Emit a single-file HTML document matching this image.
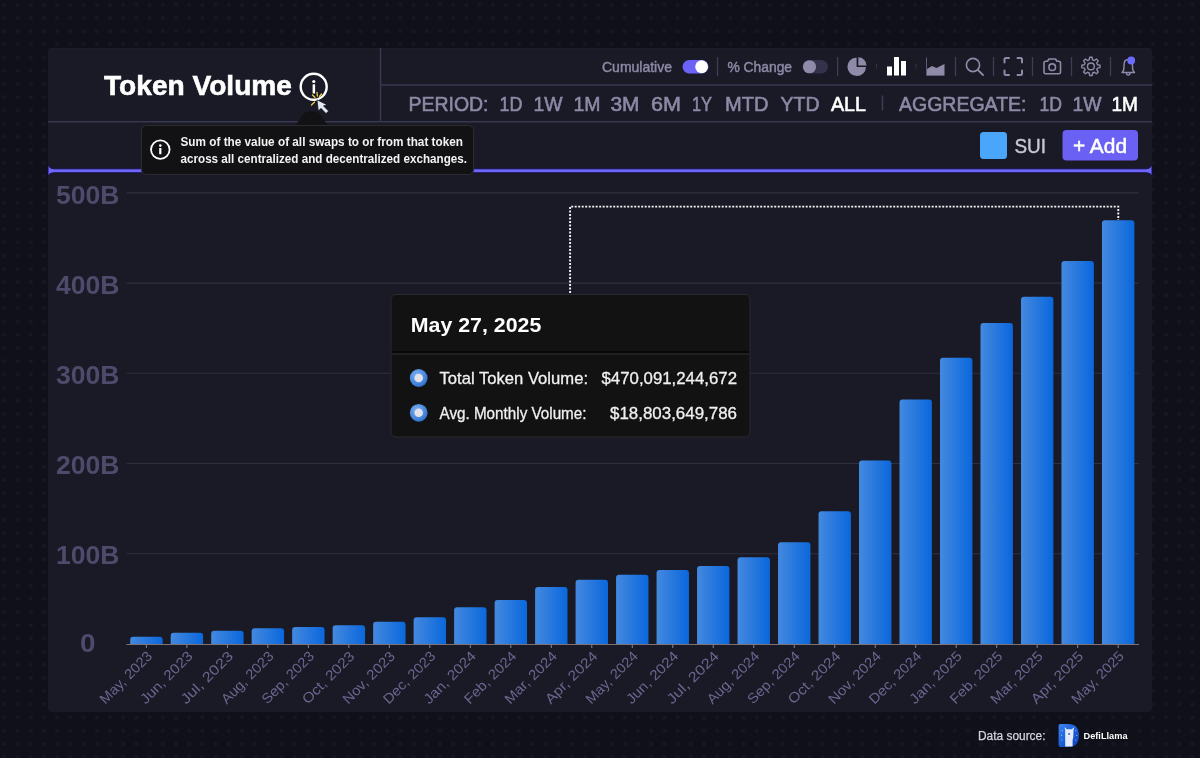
<!DOCTYPE html>
<html><head><meta charset="utf-8">
<style>
html,body{margin:0;padding:0;width:1200px;height:758px;overflow:hidden;background:#0f1019;}
svg{display:block;font-family:"Liberation Sans",sans-serif;will-change:transform;}
</style></head>
<body>
<svg width="1200" height="758" viewBox="0 0 1200 758">
<defs>
  <pattern id="dots" x="-2.2" y="-1.9" width="13.2" height="13.2" patternUnits="userSpaceOnUse">
    <rect x="4.6" y="4.6" width="4" height="4" rx="1.5" fill="#161722"/>
  </pattern>
  <linearGradient id="bar" x1="0" y1="0" x2="1" y2="0">
    <stop offset="0" stop-color="#4489df"/>
    <stop offset="1" stop-color="#0a67dc"/>
  </linearGradient>
  <radialGradient id="dotg" cx="0.4" cy="0.35" r="0.7">
    <stop offset="0" stop-color="#7fb4f2"/>
    <stop offset="1" stop-color="#2a6fd0"/>
  </radialGradient>
</defs>
<!-- page background -->
<rect width="1200" height="758" fill="#0f1019"/>
<rect width="1200" height="758" fill="url(#dots)"/>
<!-- panel -->
<rect x="48" y="48" width="1104" height="664" rx="4" fill="#191a25"/>
<rect x="50" y="48.2" width="1100" height="1.2" fill="#1e1f2a"/>

<!-- header lines -->
<g stroke="#383750" stroke-width="1.5">
  <line x1="380.5" y1="48" x2="380.5" y2="121.5"/>
  <line x1="380.5" y1="85" x2="1152" y2="85"/>
  <line x1="48" y1="121.7" x2="1152" y2="121.7"/>
</g>

<!-- title -->
<text x="104" y="95.4" font-size="28" font-weight="700" fill="#ffffff" stroke="#ffffff" stroke-width="0.6" textLength="188" lengthAdjust="spacingAndGlyphs">Token Volume</text>


<!-- title info icon -->
<circle cx="313.7" cy="86.8" r="13" fill="none" stroke="#ffffff" stroke-width="2.4"/>
<circle cx="313.8" cy="81.5" r="1.6" fill="#ffffff"/>
<rect x="312.6" y="84.3" width="2.5" height="9.2" rx="0.5" fill="#ffffff"/>

<!-- toolbar row 1 -->
<g fill="#8d89a6" font-size="14" stroke="#8d89a6" stroke-width="0.45">
  <text x="602" y="71.7" textLength="70" lengthAdjust="spacingAndGlyphs">Cumulative</text>
  <text x="727.5" y="71.7" textLength="64.5" lengthAdjust="spacingAndGlyphs">% Change</text>
</g>


<!-- toggles -->
<rect x="682.5" y="60" width="26" height="13.5" rx="6.75" fill="#6b63f6"/>
<circle cx="701.6" cy="66.75" r="6.4" fill="#ffffff"/>
<rect x="802.5" y="60" width="25.5" height="13.5" rx="6.75" fill="#33324a"/>
<circle cx="809.5" cy="66.75" r="6.6" fill="#8e8aa8"/>
<!-- dividers -->
<g stroke="#3f3d55" stroke-width="1.3">
  <line x1="717.5" y1="57" x2="717.5" y2="76"/>
  <line x1="837.6" y1="57" x2="837.6" y2="76"/>
  <line x1="955.5" y1="57" x2="955.5" y2="76"/>
  <line x1="993.5" y1="57" x2="993.5" y2="76"/>
  <line x1="1032.5" y1="57" x2="1032.5" y2="76"/>
  <line x1="1071.5" y1="57" x2="1071.5" y2="76"/>
  <line x1="1110.5" y1="57" x2="1110.5" y2="76"/>
</g>
<g stroke="#34334a" stroke-width="1">
  <line x1="876.5" y1="64" x2="876.5" y2="68.5"/>
  <line x1="916" y1="64" x2="916" y2="68.5"/>
</g>
<!-- pie icon -->
<path d="M856.6,57.5 A9.3,9.3 0 1 0 866,67 L856.6,67 Z" fill="#8e8aa8"/>
<path d="M858.3,57.3 A8.3,8.3 0 0 1 866.6,65.5 L858.3,65.5 Z" fill="#8e8aa8"/>
<!-- bar icon -->
<g fill="#ffffff">
  <rect x="887" y="66.5" width="5" height="9"/>
  <rect x="894" y="57" width="5" height="18.5"/>
  <rect x="901" y="61" width="5" height="14.5"/>
</g>
<!-- area icon -->
<path d="M926.5,57.5 V75.5 H944.5" fill="none" stroke="#5e5a78" stroke-width="1"/>
<path d="M927,69 L932,66 L936.5,68 L944.5,64 V75 H927 Z" fill="#8e8aa8"/>
<!-- search -->
<circle cx="973" cy="65" r="6.6" fill="none" stroke="#8e8aa8" stroke-width="1.6"/>
<line x1="977.8" y1="69.8" x2="983" y2="75" stroke="#8e8aa8" stroke-width="1.8" stroke-linecap="round"/>
<!-- fullscreen -->
<g fill="none" stroke="#8e8aa8" stroke-width="2" stroke-linecap="round" stroke-linejoin="round">
  <path d="M1004.5,62.5 V59.5 Q1004.5,58 1006,58 H1009"/>
  <path d="M1017.5,58 H1020.5 Q1022,58 1022,59.5 V62.5"/>
  <path d="M1004.5,70.5 V73.5 Q1004.5,75 1006,75 H1009"/>
  <path d="M1017.5,75 H1020.5 Q1022,75 1022,73.5 V70.5"/>
</g>
<!-- camera -->
<g fill="none" stroke="#8e8aa8" stroke-width="1.6" stroke-linejoin="round">
  <path d="M1044,63 Q1044,61.3 1045.7,61.3 H1047.5 L1049,59 H1055.5 L1057,61.3 H1058.8 Q1060.5,61.3 1060.5,63 V72.3 Q1060.5,73.8 1059,73.8 H1045.5 Q1044,73.8 1044,72.3 Z"/>
  <circle cx="1052.2" cy="67.2" r="3.3"/>
</g>
<!-- gear -->
<g fill="none" stroke="#8e8aa8" stroke-width="1.4" stroke-linejoin="round">
  <path d="M1097.49,64.72 L1100.01,65.12 L1100.01,67.68 L1097.49,68.08 L1096.75,69.87 L1098.25,71.93 L1096.43,73.75 L1094.37,72.25 L1092.58,72.99 L1092.18,75.51 L1089.62,75.51 L1089.22,72.99 L1087.43,72.25 L1085.37,73.75 L1083.55,71.93 L1085.05,69.87 L1084.31,68.08 L1081.79,67.68 L1081.79,65.12 L1084.31,64.72 L1085.05,62.93 L1083.55,60.87 L1085.37,59.05 L1087.43,60.55 L1089.22,59.81 L1089.62,57.29 L1092.18,57.29 L1092.58,59.81 L1094.37,60.55 L1096.43,59.05 L1098.25,60.87 L1096.75,62.93 Z"/>
  <circle cx="1090.9" cy="66.4" r="3.4"/>
</g>
<!-- bell -->
<g fill="none" stroke="#8e8aa8" stroke-width="1.4" stroke-linejoin="round" stroke-linecap="round">
  <path d="M1122,72.5 Q1124,71 1124,67 V65 Q1124,59.5 1128.2,59.5 Q1132.5,59.5 1132.5,65 V67 Q1132.5,71 1134.5,72.5 Z"/>
  <path d="M1126.3,72.8 Q1126.5,75 1128.2,75 Q1130,75 1130.2,72.8"/>
</g>
<circle cx="1131.2" cy="60.5" r="3.9" fill="#6b6bff"/>

<!-- toolbar row 2 -->
<g fill="#8d89a6" font-size="20.5" stroke="#8d89a6" stroke-width="0.6">
  <text x="408.5" y="110.8" textLength="80" lengthAdjust="spacingAndGlyphs">PERIOD:</text>
  <text x="499.5" y="110.8" textLength="23" lengthAdjust="spacingAndGlyphs">1D</text>
  <text x="533.5" y="110.8" textLength="29" lengthAdjust="spacingAndGlyphs">1W</text>
  <text x="573.5" y="110.8" textLength="27" lengthAdjust="spacingAndGlyphs">1M</text>
  <text x="610.5" y="110.8" textLength="29" lengthAdjust="spacingAndGlyphs">3M</text>
  <text x="651.0" y="110.8" textLength="30" lengthAdjust="spacingAndGlyphs">6M</text>
  <text x="692.0" y="110.8" textLength="20" lengthAdjust="spacingAndGlyphs">1Y</text>
  <text x="725.0" y="110.8" textLength="43.5" lengthAdjust="spacingAndGlyphs">MTD</text>
  <text x="780.5" y="110.8" textLength="39" lengthAdjust="spacingAndGlyphs">YTD</text>
  <text x="831.0" y="110.8" textLength="35" lengthAdjust="spacingAndGlyphs" fill="#ffffff" stroke="#ffffff">ALL</text>
  <text x="899.0" y="110.8" textLength="127.5" lengthAdjust="spacingAndGlyphs">AGGREGATE:</text>
  <text x="1039.5" y="110.8" textLength="22.5" lengthAdjust="spacingAndGlyphs">1D</text>
  <text x="1072.5" y="110.8" textLength="29" lengthAdjust="spacingAndGlyphs">1W</text>
  <text x="1111.5" y="110.8" textLength="26.5" lengthAdjust="spacingAndGlyphs" fill="#ffffff" stroke="#ffffff">1M</text>
</g>
<line x1="882.5" y1="95.5" x2="882.5" y2="110.5" stroke="#3f3d55" stroke-width="1.5"/>

<!-- SUI legend / Add -->
<rect x="980" y="132" width="27" height="27" rx="3.5" fill="#4aa6fb"/>
<text x="1014.5" y="152.7" font-size="20" fill="#c9c8d2" stroke="#c9c8d2" stroke-width="0.4" textLength="31.5" lengthAdjust="spacingAndGlyphs">SUI</text>
<rect x="1062.5" y="130" width="75.5" height="30.5" rx="4" fill="#6a60f4"/>
<text x="1073" y="152.7" font-size="20" fill="#ffffff" stroke="#ffffff" stroke-width="0.5" textLength="54" lengthAdjust="spacingAndGlyphs">+ Add</text>

<!-- purple slider line -->
<path d="M48,164.5 Q49.2,168.6 53.5,168.8 H1146.5 Q1150.8,168.6 1152,164.5 V176.2 Q1150.8,172.8 1146.5,172.7 H53.5 Q49.2,172.8 48,176.2 Z" fill="#6d66f8" stroke="#120f45" stroke-width="0.9"/>

<!-- chart grid -->
<g stroke="#302f3f" stroke-width="1.1">
  <line x1="126.5" y1="192.9" x2="1139" y2="192.9"/>
  <line x1="126.5" y1="283.1" x2="1139" y2="283.1"/>
  <line x1="126.5" y1="373.3" x2="1139" y2="373.3"/>
  <line x1="126.5" y1="463.5" x2="1139" y2="463.5"/>
  <line x1="126.5" y1="553.7" x2="1139" y2="553.7"/>
</g>
<g fill="#4d4a6b" font-size="26" font-weight="700">
  <text x="56" y="204.4" textLength="63.5" lengthAdjust="spacingAndGlyphs">500B</text>
  <text x="56" y="293.8" textLength="63.5" lengthAdjust="spacingAndGlyphs">400B</text>
  <text x="56" y="383.9" textLength="63.5" lengthAdjust="spacingAndGlyphs">300B</text>
  <text x="56" y="473.6" textLength="63.5" lengthAdjust="spacingAndGlyphs">200B</text>
  <text x="56" y="563.8" textLength="63.5" lengthAdjust="spacingAndGlyphs">100B</text>
  <text x="80" y="651.8" textLength="15.5" lengthAdjust="spacingAndGlyphs">0</text>
</g>

<!-- BARS -->
<g id="bars" fill="url(#bar)">
<path d="M130.20,644.3 V639.70 Q130.20,636.70 133.20,636.70 H159.60 Q162.60,636.70 162.60,639.70 V644.3 Z"/>
<path d="M170.69,644.3 V635.70 Q170.69,632.70 173.69,632.70 H200.09 Q203.09,632.70 203.09,635.70 V644.3 Z"/>
<path d="M211.18,644.3 V633.70 Q211.18,630.70 214.18,630.70 H240.58 Q243.58,630.70 243.58,633.70 V644.3 Z"/>
<path d="M251.67,644.3 V631.30 Q251.67,628.30 254.67,628.30 H281.07 Q284.07,628.30 284.07,631.30 V644.3 Z"/>
<path d="M292.16,644.3 V630.00 Q292.16,627.00 295.16,627.00 H321.56 Q324.56,627.00 324.56,630.00 V644.3 Z"/>
<path d="M332.65,644.3 V628.30 Q332.65,625.30 335.65,625.30 H362.05 Q365.05,625.30 365.05,628.30 V644.3 Z"/>
<path d="M373.14,644.3 V624.70 Q373.14,621.70 376.14,621.70 H402.54 Q405.54,621.70 405.54,624.70 V644.3 Z"/>
<path d="M413.63,644.3 V620.30 Q413.63,617.30 416.63,617.30 H443.03 Q446.03,617.30 446.03,620.30 V644.3 Z"/>
<path d="M454.12,644.3 V610.30 Q454.12,607.30 457.12,607.30 H483.52 Q486.52,607.30 486.52,610.30 V644.3 Z"/>
<path d="M494.61,644.3 V603.00 Q494.61,600.00 497.61,600.00 H524.01 Q527.01,600.00 527.01,603.00 V644.3 Z"/>
<path d="M535.10,644.3 V590.00 Q535.10,587.00 538.10,587.00 H564.50 Q567.50,587.00 567.50,590.00 V644.3 Z"/>
<path d="M575.59,644.3 V582.70 Q575.59,579.70 578.59,579.70 H604.99 Q607.99,579.70 607.99,582.70 V644.3 Z"/>
<path d="M616.08,644.3 V577.70 Q616.08,574.70 619.08,574.70 H645.48 Q648.48,574.70 648.48,577.70 V644.3 Z"/>
<path d="M656.57,644.3 V573.00 Q656.57,570.00 659.57,570.00 H685.97 Q688.97,570.00 688.97,573.00 V644.3 Z"/>
<path d="M697.06,644.3 V569.00 Q697.06,566.00 700.06,566.00 H726.46 Q729.46,566.00 729.46,569.00 V644.3 Z"/>
<path d="M737.55,644.3 V560.30 Q737.55,557.30 740.55,557.30 H766.95 Q769.95,557.30 769.95,560.30 V644.3 Z"/>
<path d="M778.04,644.3 V545.30 Q778.04,542.30 781.04,542.30 H807.44 Q810.44,542.30 810.44,545.30 V644.3 Z"/>
<path d="M818.53,644.3 V514.30 Q818.53,511.30 821.53,511.30 H847.93 Q850.93,511.30 850.93,514.30 V644.3 Z"/>
<path d="M859.02,644.3 V463.40 Q859.02,460.40 862.02,460.40 H888.42 Q891.42,460.40 891.42,463.40 V644.3 Z"/>
<path d="M899.51,644.3 V402.50 Q899.51,399.50 902.51,399.50 H928.91 Q931.91,399.50 931.91,402.50 V644.3 Z"/>
<path d="M940.00,644.3 V360.70 Q940.00,357.70 943.00,357.70 H969.40 Q972.40,357.70 972.40,360.70 V644.3 Z"/>
<path d="M980.49,644.3 V326.00 Q980.49,323.00 983.49,323.00 H1009.89 Q1012.89,323.00 1012.89,326.00 V644.3 Z"/>
<path d="M1020.98,644.3 V299.80 Q1020.98,296.80 1023.98,296.80 H1050.38 Q1053.38,296.80 1053.38,299.80 V644.3 Z"/>
<path d="M1061.47,644.3 V264.00 Q1061.47,261.00 1064.47,261.00 H1090.87 Q1093.87,261.00 1093.87,264.00 V644.3 Z"/>
<path d="M1101.96,644.3 V223.30 Q1101.96,220.30 1104.96,220.30 H1131.36 Q1134.36,220.30 1134.36,223.30 V644.3 Z"/>
</g>

<!-- axis -->
<line x1="126.5" y1="644.5" x2="1139" y2="644.5" stroke="#7d7478" stroke-width="1.1"/>
<g id="ticks" stroke="#8a8398" stroke-width="1">
<line x1="146.40" y1="644.8" x2="146.40" y2="648"/>
<line x1="186.89" y1="644.8" x2="186.89" y2="648"/>
<line x1="227.38" y1="644.8" x2="227.38" y2="648"/>
<line x1="267.87" y1="644.8" x2="267.87" y2="648"/>
<line x1="308.36" y1="644.8" x2="308.36" y2="648"/>
<line x1="348.85" y1="644.8" x2="348.85" y2="648"/>
<line x1="389.34" y1="644.8" x2="389.34" y2="648"/>
<line x1="429.83" y1="644.8" x2="429.83" y2="648"/>
<line x1="470.32" y1="644.8" x2="470.32" y2="648"/>
<line x1="510.81" y1="644.8" x2="510.81" y2="648"/>
<line x1="551.30" y1="644.8" x2="551.30" y2="648"/>
<line x1="591.79" y1="644.8" x2="591.79" y2="648"/>
<line x1="632.28" y1="644.8" x2="632.28" y2="648"/>
<line x1="672.77" y1="644.8" x2="672.77" y2="648"/>
<line x1="713.26" y1="644.8" x2="713.26" y2="648"/>
<line x1="753.75" y1="644.8" x2="753.75" y2="648"/>
<line x1="794.24" y1="644.8" x2="794.24" y2="648"/>
<line x1="834.73" y1="644.8" x2="834.73" y2="648"/>
<line x1="875.22" y1="644.8" x2="875.22" y2="648"/>
<line x1="915.71" y1="644.8" x2="915.71" y2="648"/>
<line x1="956.20" y1="644.8" x2="956.20" y2="648"/>
<line x1="996.69" y1="644.8" x2="996.69" y2="648"/>
<line x1="1037.18" y1="644.8" x2="1037.18" y2="648"/>
<line x1="1077.67" y1="644.8" x2="1077.67" y2="648"/>
<line x1="1118.16" y1="644.8" x2="1118.16" y2="648"/>
</g>
<g id="xlabels" fill="#6a6690" font-size="14">
<text x="153.00" y="657" text-anchor="end" textLength="67.5" lengthAdjust="spacingAndGlyphs" transform="rotate(-45 153.00 657)">May, 2023</text>
<text x="193.49" y="657" text-anchor="end" textLength="67.5" lengthAdjust="spacingAndGlyphs" transform="rotate(-45 193.49 657)">Jun, 2023</text>
<text x="233.98" y="657" text-anchor="end" textLength="67.5" lengthAdjust="spacingAndGlyphs" transform="rotate(-45 233.98 657)">Jul, 2023</text>
<text x="274.47" y="657" text-anchor="end" textLength="67.5" lengthAdjust="spacingAndGlyphs" transform="rotate(-45 274.47 657)">Aug, 2023</text>
<text x="314.96" y="657" text-anchor="end" textLength="67.5" lengthAdjust="spacingAndGlyphs" transform="rotate(-45 314.96 657)">Sep, 2023</text>
<text x="355.45" y="657" text-anchor="end" textLength="67.5" lengthAdjust="spacingAndGlyphs" transform="rotate(-45 355.45 657)">Oct, 2023</text>
<text x="395.94" y="657" text-anchor="end" textLength="67.5" lengthAdjust="spacingAndGlyphs" transform="rotate(-45 395.94 657)">Nov, 2023</text>
<text x="436.43" y="657" text-anchor="end" textLength="67.5" lengthAdjust="spacingAndGlyphs" transform="rotate(-45 436.43 657)">Dec, 2023</text>
<text x="476.92" y="657" text-anchor="end" textLength="67.5" lengthAdjust="spacingAndGlyphs" transform="rotate(-45 476.92 657)">Jan, 2024</text>
<text x="517.41" y="657" text-anchor="end" textLength="67.5" lengthAdjust="spacingAndGlyphs" transform="rotate(-45 517.41 657)">Feb, 2024</text>
<text x="557.90" y="657" text-anchor="end" textLength="67.5" lengthAdjust="spacingAndGlyphs" transform="rotate(-45 557.90 657)">Mar, 2024</text>
<text x="598.39" y="657" text-anchor="end" textLength="67.5" lengthAdjust="spacingAndGlyphs" transform="rotate(-45 598.39 657)">Apr, 2024</text>
<text x="638.88" y="657" text-anchor="end" textLength="67.5" lengthAdjust="spacingAndGlyphs" transform="rotate(-45 638.88 657)">May, 2024</text>
<text x="679.37" y="657" text-anchor="end" textLength="67.5" lengthAdjust="spacingAndGlyphs" transform="rotate(-45 679.37 657)">Jun, 2024</text>
<text x="719.86" y="657" text-anchor="end" textLength="67.5" lengthAdjust="spacingAndGlyphs" transform="rotate(-45 719.86 657)">Jul, 2024</text>
<text x="760.35" y="657" text-anchor="end" textLength="67.5" lengthAdjust="spacingAndGlyphs" transform="rotate(-45 760.35 657)">Aug, 2024</text>
<text x="800.84" y="657" text-anchor="end" textLength="67.5" lengthAdjust="spacingAndGlyphs" transform="rotate(-45 800.84 657)">Sep, 2024</text>
<text x="841.33" y="657" text-anchor="end" textLength="67.5" lengthAdjust="spacingAndGlyphs" transform="rotate(-45 841.33 657)">Oct, 2024</text>
<text x="881.82" y="657" text-anchor="end" textLength="67.5" lengthAdjust="spacingAndGlyphs" transform="rotate(-45 881.82 657)">Nov, 2024</text>
<text x="922.31" y="657" text-anchor="end" textLength="67.5" lengthAdjust="spacingAndGlyphs" transform="rotate(-45 922.31 657)">Dec, 2024</text>
<text x="962.80" y="657" text-anchor="end" textLength="67.5" lengthAdjust="spacingAndGlyphs" transform="rotate(-45 962.80 657)">Jan, 2025</text>
<text x="1003.29" y="657" text-anchor="end" textLength="67.5" lengthAdjust="spacingAndGlyphs" transform="rotate(-45 1003.29 657)">Feb, 2025</text>
<text x="1043.78" y="657" text-anchor="end" textLength="67.5" lengthAdjust="spacingAndGlyphs" transform="rotate(-45 1043.78 657)">Mar, 2025</text>
<text x="1084.27" y="657" text-anchor="end" textLength="67.5" lengthAdjust="spacingAndGlyphs" transform="rotate(-45 1084.27 657)">Apr, 2025</text>
<text x="1124.76" y="657" text-anchor="end" textLength="67.5" lengthAdjust="spacingAndGlyphs" transform="rotate(-45 1124.76 657)">May, 2025</text>
</g>


<!-- dotted indicator -->
<path d="M570.1,293 V206.6 H1118.3 V220" fill="none" stroke="#f4f4f8" stroke-width="1.9" stroke-dasharray="2 1.5"/>

<!-- tooltip card -->
<rect x="391" y="294.5" width="359" height="142.5" rx="5" fill="#121212" stroke="#2a2a2e" stroke-width="1"/>
<line x1="391.5" y1="352" x2="749.5" y2="352" stroke="#000000" stroke-width="1.2"/>
<line x1="391.5" y1="354" x2="749.5" y2="354" stroke="#2e2e30" stroke-width="1.2"/>
<text x="410.8" y="331.8" font-size="21" font-weight="700" fill="#ffffff" textLength="130.5" lengthAdjust="spacingAndGlyphs">May 27, 2025</text>
<circle cx="418.7" cy="378" r="8.9" fill="url(#dotg)"/>
<circle cx="418.7" cy="378" r="4.3" fill="#e2e2e8"/>
<circle cx="418.7" cy="412.8" r="8.9" fill="url(#dotg)"/>
<circle cx="418.7" cy="412.8" r="4.3" fill="#e2e2e8"/>
<g fill="#f0f0f0" font-size="17" stroke="#f0f0f0" stroke-width="0.3">
  <text x="439.5" y="384.2" textLength="148.5" lengthAdjust="spacingAndGlyphs">Total Token Volume:</text>
  <text x="439.5" y="419" textLength="147" lengthAdjust="spacingAndGlyphs">Avg. Monthly Volume:</text>
  <text x="601.5" y="384.2" textLength="135.5" lengthAdjust="spacingAndGlyphs">$470,091,244,672</text>
  <text x="610" y="419" textLength="127" lengthAdjust="spacingAndGlyphs">$18,803,649,786</text>
</g>

<!-- footer -->
<text x="978" y="739.7" font-size="12" fill="#d4d4dc" stroke="#d4d4dc" stroke-width="0.25" textLength="67.5" lengthAdjust="spacingAndGlyphs">Data source:</text>
<defs><linearGradient id="llg" x1="0" y1="0" x2="1" y2="1"><stop offset="0" stop-color="#3f86f2"/><stop offset="0.5" stop-color="#1a5fd9"/><stop offset="1" stop-color="#0d3fb8"/></linearGradient></defs>
<path d="M1058.6,725.8 Q1058.6,724 1060.4,724 H1067.8 Q1079,724 1079,735.4 Q1079,746.9 1067.8,746.9 H1060.4 Q1058.6,746.9 1058.6,745.1 Z" fill="url(#llg)"/>
<path d="M1065.2,746.5 V737.2 Q1065,733 1065.3,730.6 L1064.4,727 L1066.8,729.2 H1071.8 L1074.4,727 L1073.4,730.6 Q1073.6,733 1073.3,737.2 L1072.6,740 V746.5 Z" fill="#e4ecfb"/>
<circle cx="1069.1" cy="734" r="0.9" fill="#2a5bc4"/>
<g fill="#9fc0f5"><circle cx="1062.2" cy="730.6" r="0.55"/><circle cx="1061.4" cy="735.4" r="0.55"/><circle cx="1062.2" cy="740" r="0.55"/><circle cx="1075.8" cy="730.6" r="0.55"/><circle cx="1076.7" cy="735.4" r="0.55"/><circle cx="1075.8" cy="740" r="0.55"/></g>
<text x="1083.5" y="739" font-size="9.3" font-weight="700" fill="#ffffff" textLength="44" lengthAdjust="spacingAndGlyphs">DefiLlama</text>

<!-- tooltip (info) -->
<path d="M295,126 L304,113 Q311.5,110 319.5,113 L328,126 Z" fill="#121214"/>
<rect x="141.5" y="125.5" width="332" height="49" rx="5" fill="#121214" stroke="#2b2b30" stroke-width="1"/>
<circle cx="160.3" cy="149.6" r="9.3" fill="none" stroke="#ffffff" stroke-width="1.8"/>
<circle cx="160.3" cy="145.6" r="1.3" fill="#ffffff"/>
<rect x="159.2" y="148" width="2.2" height="6.2" fill="#ffffff"/>
<g fill="#f2f2f2" font-size="12.5" font-weight="700">
  <text x="180.5" y="145.8" textLength="282.5" lengthAdjust="spacingAndGlyphs">Sum of the value of all swaps to or from that token</text>
  <text x="180.5" y="162.5" textLength="286.5" lengthAdjust="spacingAndGlyphs">across all centralized and decentralized exchanges.</text>
</g>

<!-- cursor with sparks -->
<g stroke="#e6cf4a" stroke-width="1.3" stroke-linecap="round">
  <line x1="312.5" y1="95" x2="315" y2="97.5"/>
  <line x1="317" y1="92.5" x2="317.4" y2="96"/>
  <line x1="321.5" y1="94" x2="319.5" y2="96.5"/>
  <line x1="311.5" y1="105" x2="314.5" y2="102"/>
</g>
<path d="M317,99.8 L318.3,111 L321,108.3 L326,113.6 L328.6,111 L323.5,106 L327,104.8 Z" fill="#e4eaf2" stroke="#101018" stroke-width="0.7"/>


</svg>
</body></html>
